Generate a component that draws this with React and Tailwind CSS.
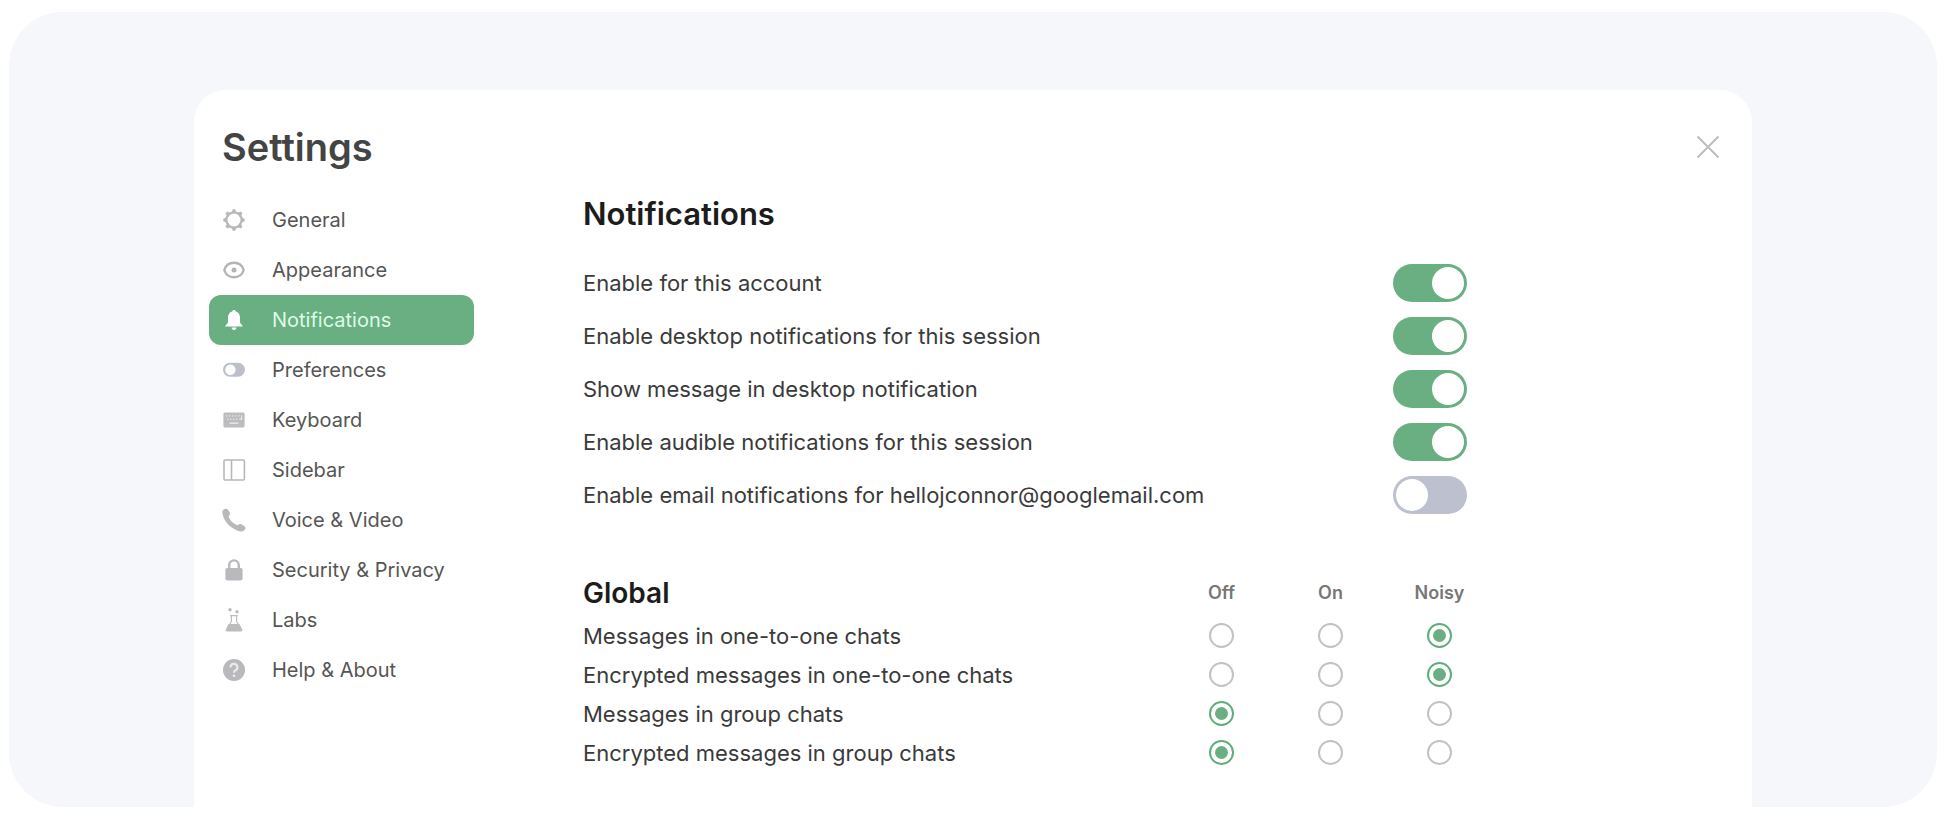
import React, { useState } from "react";

function Icon({ children }) {
  return (
    <svg viewBox="0 0 24 24" className="h-6 w-6 shrink-0" fill="currentColor" aria-hidden="true">
      {children}
    </svg>
  );
}

const icons = {
  general: (
    <Icon>
      <circle cx="12" cy="12" r="7.600" fill="none" stroke="currentColor" strokeWidth="2.200" />
      {[0, 45, 90, 135, 180, 225, 270, 315].map((angle) => (
        <path key={angle} d="M9.600 4.600 L10.800 1.300 H13.200 L14.400 4.600 Z" transform={`rotate(${angle} 12 12)`} />
      ))}
    </Icon>
  ),
  appearance: (
    <Icon>
      <path
        d="M2.300 12C3.800 7.200 7.600 4.800 12 4.800S20.200 7.200 21.700 12C20.200 16.800 16.400 19.200 12 19.200S3.800 16.800 2.300 12Z"
        fill="none"
        stroke="currentColor"
        strokeWidth="2.400"
        strokeLinejoin="round"
      />
      <circle cx="12" cy="12" r="2.500" />
    </Icon>
  ),
  notifications: (
    <Icon>
      <path d="M12 2C10.900 2 10.300 2.700 10.200 3.600C7.300 4.400 6 6.700 6 9.600V14.200C6 15.500 3.200 16.800 3.200 18.600H20.800C20.800 16.800 18 15.500 18 14.200V9.600C18 6.700 16.700 4.400 13.800 3.600C13.700 2.700 13.100 2 12 2Z" />
      <path d="M9.600 19.600H14.400C14.400 21 13.400 22 12 22S9.600 21 9.600 19.600Z" />
    </Icon>
  ),
  preferences: (
    <Icon>
      <path
        fillRule="evenodd"
        d="M8 4.800H16A7 7 0 0 1 16 18.800H8A7 7 0 0 1 8 4.800ZM8.400 6.600A5.200 5.200 0 1 0 8.400 17A5.200 5.200 0 1 0 8.400 6.600Z"
      />
    </Icon>
  ),
  keyboard: (
    <Icon>
      <rect x="1.400" y="4.400" width="21.200" height="15" rx="1.400" />
      <g fill="#e4e4e4">
        {[4, 7, 10, 13, 16].map((x) => (
          <rect key={x} x={x} y="7.200" width="1.400" height="1.400" />
        ))}
        {[5, 8, 11, 14].map((x) => (
          <rect key={x} x={x} y="10.600" width="1.400" height="1.400" />
        ))}
        <path d="M17.500 10.600H19V7.200H20.200V12H17.500Z" />
        <rect x="7.500" y="14.400" width="9" height="1.600" />
      </g>
    </Icon>
  ),
  sidebar: (
    <Icon>
      <g fill="none" stroke="currentColor" strokeWidth="1.600">
        <rect x="2" y="2" width="20.400" height="20" rx="1" />
        <path d="M9.500 2V22" />
      </g>
    </Icon>
  ),
  voice: (
    <Icon>
      <path d="M1.600 1.600C3.400 0.200 5.200 0.600 6.400 2.200L7.600 4.200C8.500 5.800 7.600 7.200 6.600 8.300C7.600 12.200 11.300 15.900 15.600 17.300C16.700 16.300 18.200 15.500 19.800 16.400L22.200 17.900C23.800 19 24 20.600 22.600 22C20.900 23.600 18.600 23.900 16 23C8.200 20 2.200 13.600 0.600 6.600C0.100 4.600 0.200 2.800 1.600 1.600Z" />
    </Icon>
  ),
  security: (
    <Icon>
      <rect x="3.400" y="10" width="17.200" height="12.400" rx="1.800" />
      <path d="M7.200 11V7.400A4.800 5 0 0 1 16.800 7.400V11" fill="none" stroke="currentColor" strokeWidth="2.400" />
    </Icon>
  ),
  labs: (
    <Icon>
      <circle cx="8" cy="1.800" r="1.700" />
      <circle cx="15" cy="3.800" r="1.700" />
      <path
        d="M9.400 7.600V13.200L4.600 22.400H19.400L14.600 13.200V7.600"
        fill="none"
        stroke="currentColor"
        strokeWidth="1.200"
        strokeLinejoin="round"
      />
      <path d="M8.200 7H15.800V8.200H8.200ZM6.600 16H17.400L20.200 21.400C20.600 22.400 20.200 23.400 19 23.400H5C3.800 23.400 3.400 22.400 3.800 21.400Z" />
    </Icon>
  ),
  help: (
    <Icon>
      <circle cx="12" cy="12" r="11" />
      <path
        d="M8.600 9.400A3.400 3.400 0 1 1 13.600 12.200C12.500 12.900 12 13.300 12 14.800"
        fill="none"
        stroke="#eaeaea"
        strokeWidth="2.200"
      />
      <circle cx="12" cy="17.800" r="1.400" fill="#eaeaea" />
    </Icon>
  ),
};

const sections = [
  { id: "general", label: "General", tint: "text-[#b8b8b8]" },
  { id: "appearance", label: "Appearance", tint: "text-[#b4b4b4]" },
  { id: "notifications", label: "Notifications", tint: "text-white" },
  { id: "preferences", label: "Preferences", tint: "text-[#bdc0cb]" },
  { id: "keyboard", label: "Keyboard", tint: "text-[#bcbcbe]" },
  { id: "sidebar", label: "Sidebar", tint: "text-[#b8b8ba]" },
  { id: "voice", label: "Voice & Video", tint: "text-[#b9b9bb]" },
  { id: "security", label: "Security & Privacy", tint: "text-[#b9b9bd]" },
  { id: "labs", label: "Labs", tint: "text-[#bcbcbe]" },
  { id: "help", label: "Help & About", tint: "text-[#b9b9bd]" },
];

const toggles = [
  { id: "account", label: "Enable for this account", on: true },
  { id: "desktop", label: "Enable desktop notifications for this session", on: true },
  { id: "message", label: "Show message in desktop notification", on: true },
  { id: "audible", label: "Enable audible notifications for this session", on: true },
  { id: "email", label: "Enable email notifications for hellojconnor@googlemail.com", on: false },
];

const levels = ["Off", "On", "Noisy"];

const rules = [
  { id: "direct", label: "Messages in one-to-one chats", level: "Noisy" },
  { id: "direct-encrypted", label: "Encrypted messages in one-to-one chats", level: "Noisy" },
  { id: "group", label: "Messages in group chats", level: "Off" },
  { id: "group-encrypted", label: "Encrypted messages in group chats", level: "Off" },
];

function Sidebar() {
  return (
    <nav aria-label="Settings sections" className="w-[265px] shrink-0">
      <ul>
        {sections.map(({ id, label, tint }) => {
          const active = id === "notifications";
          return (
            <li key={id}>
              <a
                href={`#${id}`}
                aria-current={active ? "page" : undefined}
                className={`flex h-[50px] items-center gap-[26px] rounded-xl pl-[13px] text-xl ${
                  active ? "bg-[#6aaf81] text-[#dcfbe8]" : "text-[#555555]"
                }`}
              >
                <span className={tint}>{icons[id]}</span>
                {label}
              </a>
            </li>
          );
        })}
      </ul>
    </nav>
  );
}

function ToggleRow({ id, label, on }) {
  return (
    <div className="flex h-[53px] items-center justify-between">
      <label htmlFor={id} className="text-[22px] leading-7">
        {label}
      </label>
      <input
        id={id}
        type="checkbox"
        role="switch"
        defaultChecked={on}
        className="flex h-[38px] w-[74px] shrink-0 cursor-pointer appearance-none items-center rounded-full bg-[#bcc0cf] px-[3px] before:h-8 before:w-8 before:rounded-full before:bg-white checked:justify-end checked:bg-[#6aaf81]"
      />
    </div>
  );
}

function RulesTable() {
  const [values, setValues] = useState(() => Object.fromEntries(rules.map((r) => [r.id, r.level])));
  return (
    <table className="mt-12 w-full table-fixed border-collapse">
      <thead>
        <tr className="h-[47px]">
          <th scope="col" className="p-0 text-left text-[28px] leading-9 font-semibold text-[#1c1c1c]">
            Global
          </th>
          {levels.map((level) => (
            <th key={level} scope="col" className="w-[109px] p-0 text-lg font-semibold text-[#777777]">
              {level}
            </th>
          ))}
        </tr>
      </thead>
      <tbody>
        {rules.map(({ id, label }) => (
          <tr key={id} className="h-[39px]">
            <th scope="row" className="p-0 text-left text-[22px] leading-7 font-normal">
              {label}
            </th>
            {levels.map((level) => (
              <td key={level} className="p-0">
                <input
                  type="radio"
                  name={id}
                  value={level}
                  aria-label={`${label}: ${level}`}
                  checked={values[id] === level}
                  onChange={() => setValues({ ...values, [id]: level })}
                  className="mx-auto flex h-[25px] w-[25px] cursor-pointer appearance-none items-center justify-center rounded-full border-2 border-[#c2c2c2] bg-white before:h-[13px] before:w-[13px] before:rounded-full checked:border-[#5fae7a] checked:before:bg-[#6aaf81]"
                />
              </td>
            ))}
          </tr>
        ))}
      </tbody>
    </table>
  );
}

export default function App() {
  return (
    <div className="bg-white pt-3 pr-[13px] pb-4 pl-[9px] font-[Inter,sans-serif]">
      <div className="overflow-hidden rounded-[54px] bg-[#f5f7fb] px-[185px] pt-[78px]">
        <main className="rounded-t-[32px] bg-white pr-8 pb-[35px] pl-[15px] text-[#3a3a3a]">
          <header className="flex items-center justify-between pt-[33px] pl-[13px]">
            <h1 className="text-[38px] leading-[48px] font-semibold text-[#444444]">Settings</h1>
            <button type="button" aria-label="Close" className="cursor-pointer text-[#bdbdbd]">
              <svg viewBox="0 0 24 24" className="h-6 w-6" fill="none" stroke="currentColor" strokeWidth="2">
                <path d="M1.500 1.500 22.500 22.500M22.500 1.500 1.500 22.500" />
              </svg>
            </button>
          </header>
          <div className="flex gap-[109px] pt-6">
            <Sidebar />
            <section className="max-w-[911px] flex-1">
              <h2 className="pb-[23px] text-[31px] leading-[38px] font-semibold text-[#1c1c1c]">Notifications</h2>
              <div className="pr-[27px]">
                {toggles.map((toggle) => (
                  <ToggleRow key={toggle.id} {...toggle} />
                ))}
              </div>
              <RulesTable />
            </section>
          </div>
        </main>
      </div>
    </div>
  );
}
